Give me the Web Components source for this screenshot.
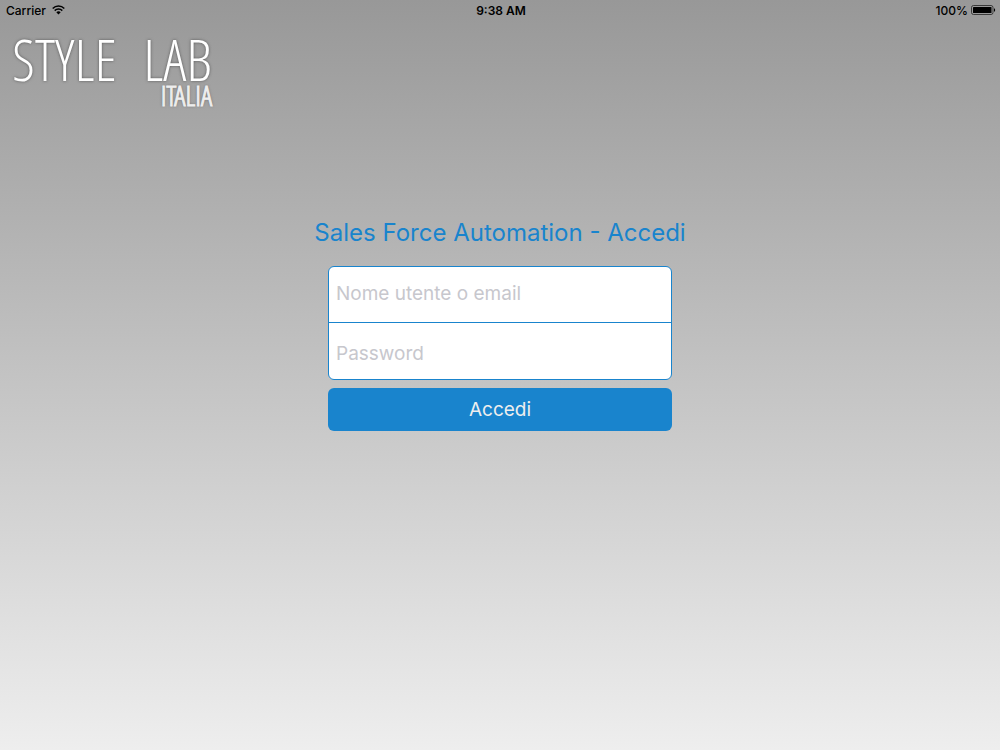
<!DOCTYPE html>
<html lang="it">
<head>
<meta charset="utf-8">
<meta name="viewport" content="width=device-width, initial-scale=1">
<title>Style Lab Italia - Accedi</title>
<style>
  body { margin: 0; font-family: Inter, "Liberation Sans", sans-serif; }
</style>
</head>
<body>
<login-page>
  <status-bar slot="status" carrier="Carrier" time="9:38 AM" battery="100%"></status-bar>
  <brand-logo slot="brand"><span>STYLE</span> <span>LAB</span><span slot="region">ITALIA</span></brand-logo>
  <login-form>Sales Force Automation - Accedi</login-form>
</login-page>

<template id="login-page">
  <style>
    :host {
      display: flex; flex-direction: column; min-height: 100vh;
      background: linear-gradient(#989898, #eeeeee);
    }
    main { display: flex; justify-content: center; padding: 108px 16px 32px; }
  </style>
  <slot name="status"></slot>
  <header><slot name="brand"></slot></header>
  <main><slot></slot></main>
</template>

<template id="status-bar">
  <style>
    :host {
      display: grid; grid-template-columns: 1fr auto 1fr; align-items: center;
      height: 20px; padding: 0 4px 0 6px; color: #000; font-size: 12px; font-weight: 500;
    }
    div { display: flex; align-items: center; gap: 6px; }
    .time { font-weight: 600; }
    .power { justify-content: flex-end; gap: 3px; }
    svg { display: block; }
  </style>
  <div><span class="carrier"></span>
    <svg width="13" height="10" viewBox="0 0 13 10" fill="none" stroke="#000" stroke-width="1.5" aria-hidden="true">
      <path d="M.7 3.5a8.2 8.2 0 0 1 11.6 0M2.7 5.6a5.4 5.4 0 0 1 7.6 0"/>
      <path d="M6.5 9.4 4.3 7.3a3.1 3.1 0 0 1 4.4 0z" fill="#000" stroke="none"/>
    </svg>
  </div>
  <span class="time"></span>
  <div class="power"><span class="battery"></span>
    <svg width="25" height="10" viewBox="0 0 25 10" aria-hidden="true">
      <rect x=".5" y=".5" width="21.5" height="9" rx="2" fill="none" stroke="#222" stroke-width=".8"/>
      <rect x="2" y="2" width="18.5" height="6" rx=".6"/>
      <path d="M23 3.2c1.5.3 1.5 3.3 0 3.6z"/>
    </svg>
  </div>
</template>

<template id="brand-logo">
  <style>
    :host {
      display: flex; flex-direction: column; width: 200px; padding: 15px 0 0 12px;
      color: #fff; font-family: "Open Sans Condensed Light", "Liberation Sans Narrow", sans-serif;
      font-weight: 300; text-shadow: 0 0 3px #555;
    }
    .name { display: flex; justify-content: space-between; font-size: 58px; line-height: 48px; }
    .region { align-self: flex-end; font-size: 28px; line-height: 24px; color: #eee; -webkit-text-stroke: 1px #eee; }
  </style>
  <div class="name"><slot></slot></div>
  <div class="region"><slot name="region"></slot></div>
</template>

<template id="login-form">
  <style>
    :host { display: block; --blue: #1984cd; }
    form { display: flex; flex-direction: column; align-items: center; }
    h1 { margin: 0 0 15px; color: var(--blue); font-size: 24px; line-height: 36px; font-weight: 400; text-align: center; }
    .fields {
      box-sizing: border-box; width: 344px; max-width: 100%; overflow: hidden;
      border: 1px solid var(--blue); border-radius: 6px; background: #fff;
    }
    input {
      display: block; box-sizing: border-box; width: 100%; height: 56px; margin: 0; padding: 4px 7px 0;
      border: 0; outline: 0; background: none; color: #222; font: 400 19px Inter, "Liberation Sans", sans-serif;
    }
    input:first-child { border-bottom: 1px solid var(--blue); padding: 0 7px 3px; }
    input::placeholder { color: #c7c7cd; opacity: 1; }
    button {
      width: 344px; max-width: 100%; height: 43px; margin: 8px 0 0; padding: 0; border: 0; border-radius: 6px;
      background: var(--blue); color: #eee; font: 400 19px Inter, "Liberation Sans", sans-serif;
    }
  </style>
  <form>
    <h1><slot></slot></h1>
    <div class="fields">
      <input type="text" placeholder="Nome utente o email" aria-label="Nome utente o email" autocomplete="username">
      <input type="password" placeholder="Password" aria-label="Password" autocomplete="current-password">
    </div>
    <button type="submit">Accedi</button>
  </form>
</template>

<script>
  class TemplateElement extends HTMLElement {
    constructor() {
      super();
      const template = document.getElementById(this.localName);
      this.attachShadow({ mode: "open" }).append(template.content.cloneNode(true));
    }
    fill(...names) {
      for (const name of names) {
        this.shadowRoot.querySelector("." + name).textContent = this.getAttribute(name);
      }
    }
  }
  customElements.define("login-page", class extends TemplateElement {});
  customElements.define("status-bar", class extends TemplateElement {
    connectedCallback() { this.fill("carrier", "time", "battery"); }
  });
  customElements.define("brand-logo", class extends TemplateElement {});
  customElements.define("login-form", class extends TemplateElement {
    connectedCallback() {
      this.shadowRoot.querySelector("form").addEventListener("submit", (event) => event.preventDefault());
    }
  });
</script>
</body>
</html>
